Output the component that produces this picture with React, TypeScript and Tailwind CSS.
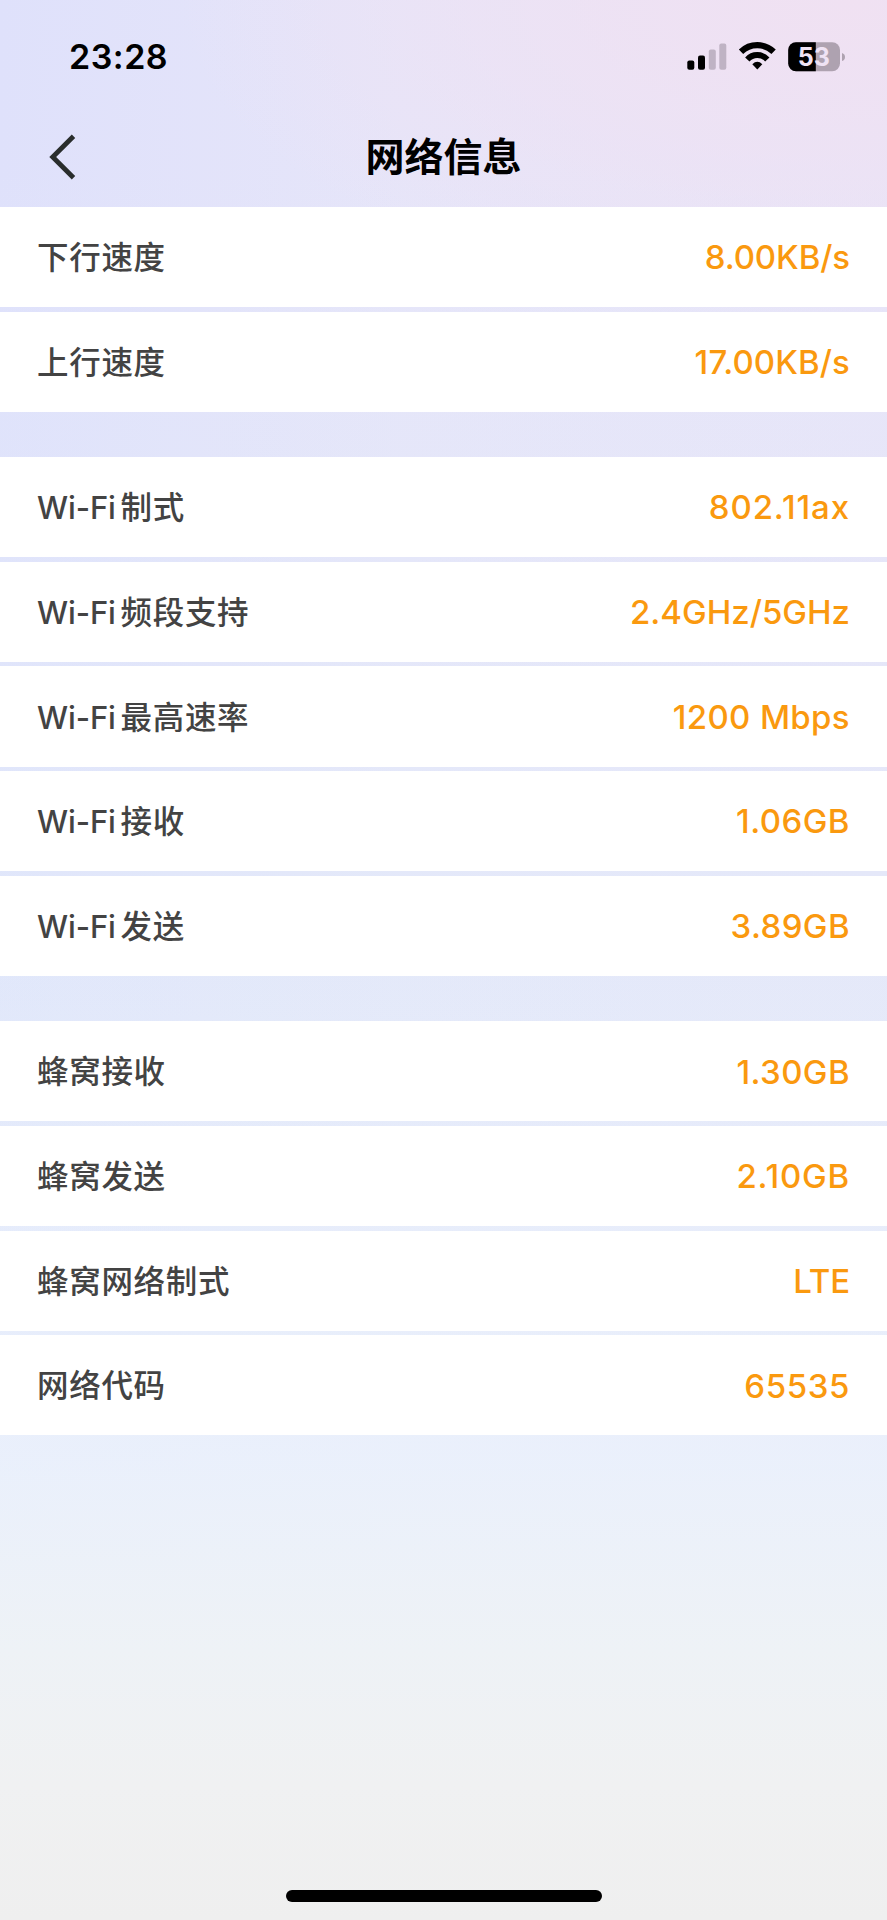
type Entry = { label: string; latin?: string; value: string; spacing: string };

const sections: Entry[][] = [
  [
    { label: "下行速度", value: "8.00KB/s", spacing: "tracking-[-0.1px]" },
    { label: "上行速度", value: "17.00KB/s", spacing: "tracking-[0.1px]" },
  ],
  [
    { latin: "Wi-Fi", label: "制式", value: "802.11ax", spacing: "tracking-[0.9px]" },
    { latin: "Wi-Fi", label: "频段支持", value: "2.4GHz/5GHz", spacing: "tracking-[0px]" },
    { latin: "Wi-Fi", label: "最高速率", value: "1200 Mbps", spacing: "tracking-[0.35px]" },
    { latin: "Wi-Fi", label: "接收", value: "1.06GB", spacing: "tracking-[0.45px]" },
    { latin: "Wi-Fi", label: "发送", value: "3.89GB", spacing: "tracking-[0.4px]" },
  ],
  [
    { label: "蜂窝接收", value: "1.30GB", spacing: "tracking-[0.4px]" },
    { label: "蜂窝发送", value: "2.10GB", spacing: "tracking-[0.8px]" },
    { label: "蜂窝网络制式", value: "LTE", spacing: "tracking-[-0.1px]" },
    { label: "网络代码", value: "65535", spacing: "tracking-[0.6px]" },
  ],
];

function StatusBar() {
  return (
    <div className="flex h-[113px] items-center justify-between pl-[69px] pr-[42px]">
      <span className="text-[34px] font-semibold leading-none tracking-[0.5px] text-black">23:28</span>
      <svg width="160" height="32" viewBox="0 0 160 32">
        <g>
          <rect x="2.3" y="19.5" width="7" height="9.2" rx="2" fill="#000" />
          <rect x="13" y="14.5" width="7" height="14.2" rx="2" fill="#000" />
          <rect x="23.8" y="8.5" width="7" height="20.2" rx="2" fill="#bfb3c4" />
          <rect x="34.3" y="2.5" width="7" height="26.2" rx="2" fill="#bfb3c4" />
        </g>
        <g fill="none" stroke="#000">
          <path strokeWidth="6.2" d="M56 10.8 A23.4 23.4 0 0 1 88.6 10.8" />
          <path strokeWidth="5.8" d="M62.3 18.5 A13.4 13.4 0 0 1 82.3 18.5" />
        </g>
        <path d="M67.3 23.2 Q72.3 18.5 77.3 23.2 L72.3 28.5 Z" fill="#000" />
        <clipPath id="battery">
          <rect x="103.2" y="1.3" width="51.8" height="29" rx="7.8" />
        </clipPath>
        <g clipPath="url(#battery)">
          <rect x="103" y="1" width="52" height="30" fill="#aea2b0" />
          <rect x="103" y="1" width="27.8" height="30" fill="#000" />
        </g>
        <path d="M157 12 Q160 13 160 16 Q160 19 157 20 Z" fill="#aea2b0" />
        <text x="128.8" y="24.8" textAnchor="middle" fontSize="25" fontWeight="700" fill="#efe3f4">53</text>
      </svg>
    </div>
  );
}

function Row({ entry }: { entry: Entry }) {
  return (
    <div className="flex h-[100.2px] items-center justify-between bg-white px-[37px] pt-[1.5px]">
      <span className="flex items-baseline text-[31.5px] font-medium leading-none tracking-[0.7px] text-[#434343]">
        {entry.latin && (
          <span className="w-[83.5px] text-[31px] tracking-[-0.1px]">{entry.latin}</span>
        )}
        <span>{entry.label}</span>
      </span>
      <span className={`text-[33px] font-medium leading-none text-[#fa990f] ${entry.spacing}`}>{entry.value}</span>
    </div>
  );
}

export default function App() {
  return (
    <div className="flex h-[1920px] w-[887px] flex-col bg-[linear-gradient(180deg,#efefef00_0%,#ecf2fa00_50%,#ecf2fccc_76%,#eef2f6_86%,#f0f1f2_93%,#efefef_100%),radial-gradient(ellipse_76%_16%_at_96%_0%,#f0e1f2_0%,#f0e1f2b0_40%,#f0e1f200_100%),linear-gradient(180deg,#e2ecfa00_8%,#e2ecfa90_50%),linear-gradient(90deg,#dfe1fb_0%,#e6e5f9_45%,#e8e4f8_100%)] font-[Inter,'Noto_Sans_CJK_SC',sans-serif]">
      <StatusBar />
      <header className="grid h-[94px] grid-cols-[1fr_auto_1fr] items-center pb-[7px]">
        <svg className="ml-[48px]" width="30" height="46" viewBox="0 0 30 46" fill="none" stroke="#292d2c" strokeWidth="4.8">
          <path d="M25.5 2.2 L4.7 23 L25.5 43.8" />
        </svg>
        <h1 className="text-[39px] font-bold leading-none text-black">网络信息</h1>
        <span />
      </header>
      <main className="flex flex-col gap-[45.2px]">
        {sections.map((rows, i) => (
          <section key={i} className="flex flex-col gap-[4.5px]">
            {rows.map((entry) => (
              <Row key={entry.label} entry={entry} />
            ))}
          </section>
        ))}
      </main>
      <div className="mb-[18px] mt-auto h-[12px] w-[316px] self-center rounded-full bg-black" />
    </div>
  );
}
